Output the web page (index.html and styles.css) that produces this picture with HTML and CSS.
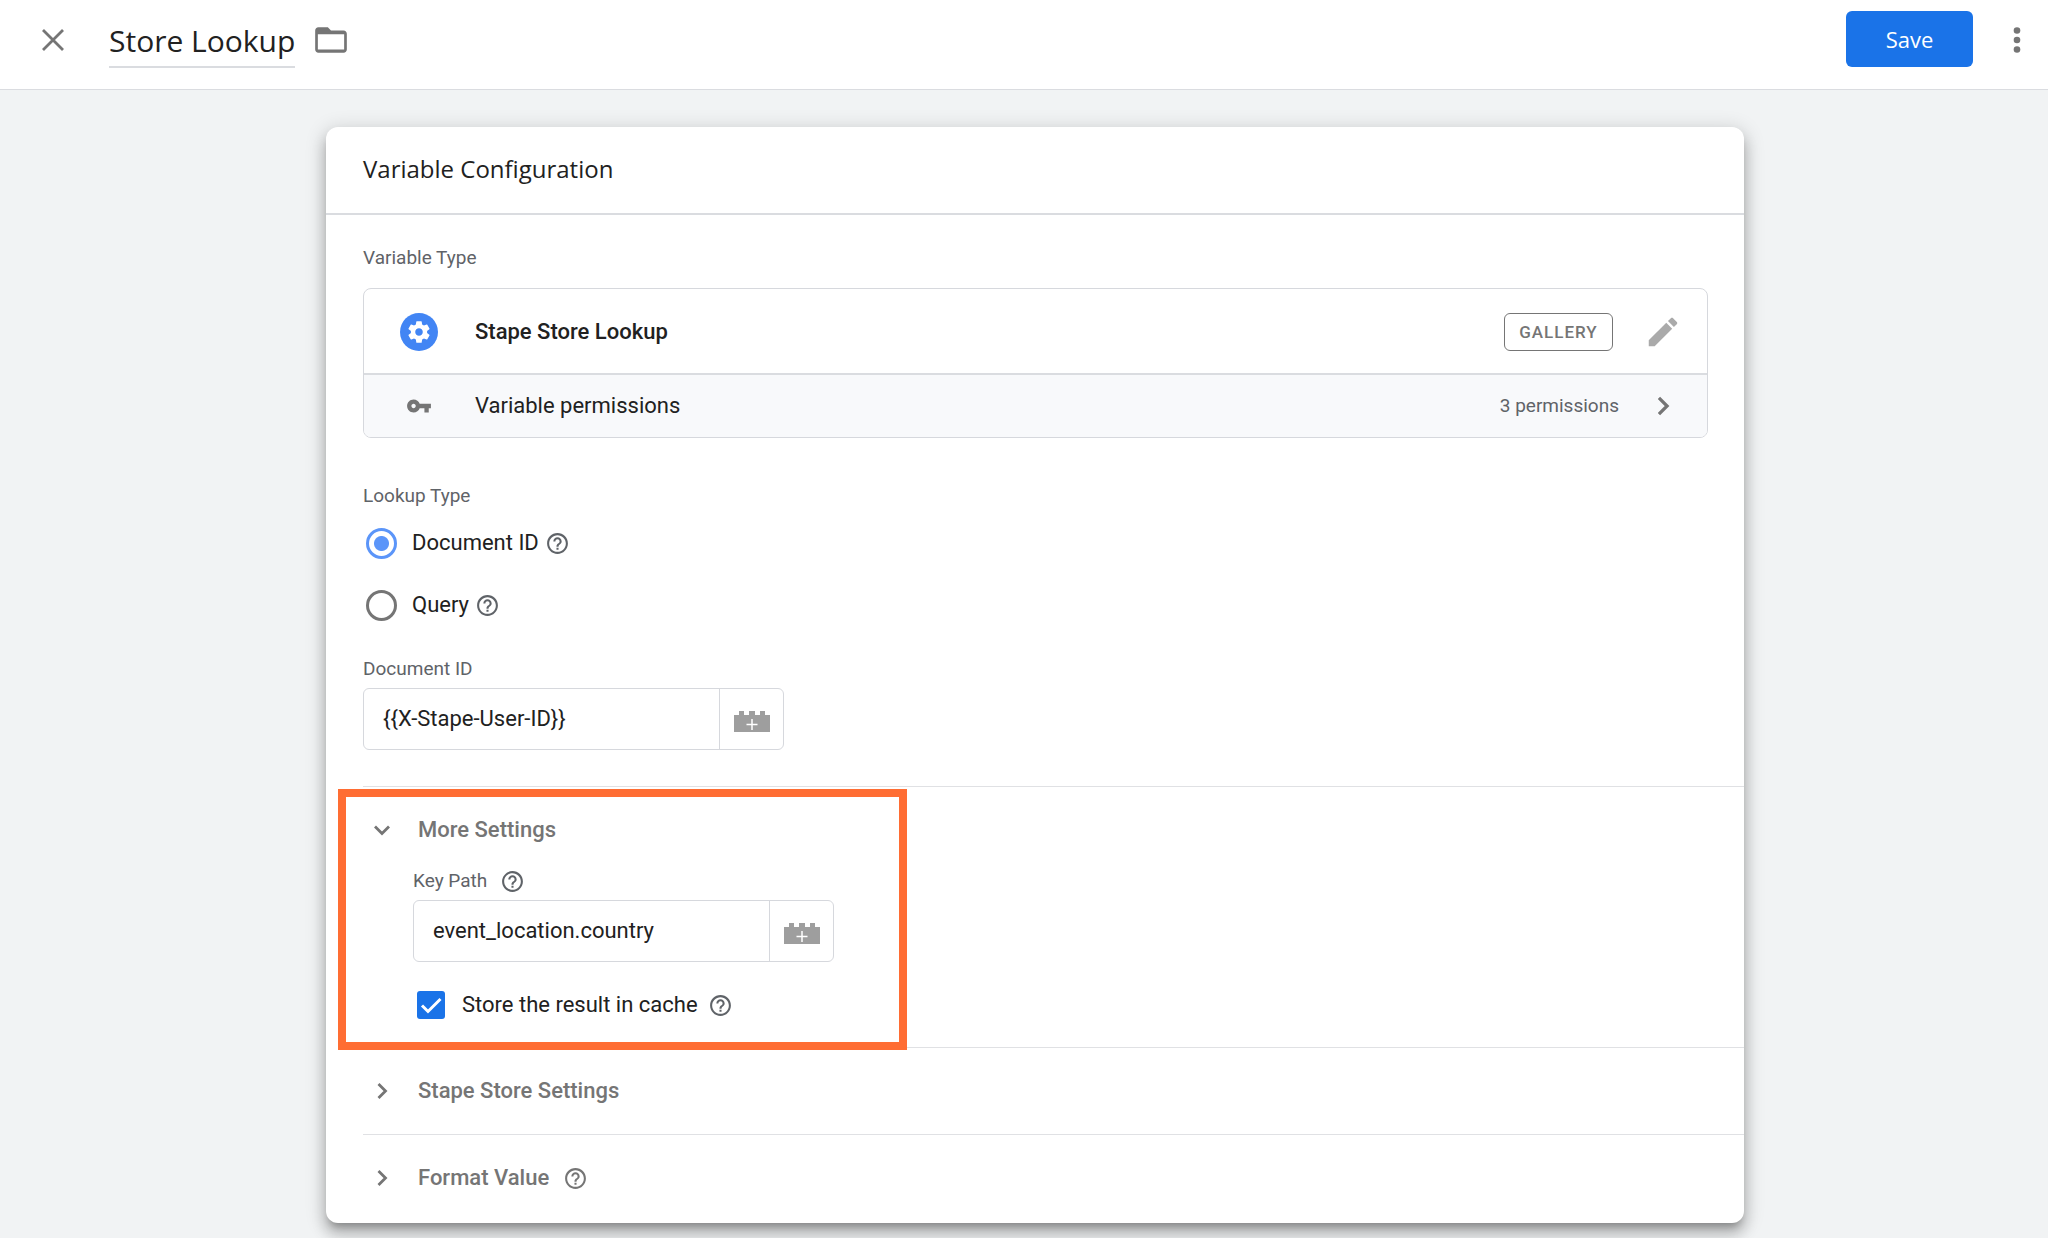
FILE: index.html
```html
<!DOCTYPE html>
<html lang="en">
<head>
<meta charset="utf-8">
<meta name="viewport" content="width=device-width, initial-scale=1">
<title>Store Lookup</title>
<link rel="stylesheet" href="styles.css">
</head>
<body>
<svg class="sprite" aria-hidden="true">
  <symbol id="i-help" viewBox="0 0 24 24"><path d="M11 18h2v-2h-2v2zm1-16C6.480 2 2 6.480 2 12s4.480 10 10 10 10-4.480 10-10S17.520 2 12 2zm0 18c-4.410 0-8-3.590-8-8s3.590-8 8-8 8 3.590 8 8-3.590 8-8 8zm0-14c-2.210 0-4 1.790-4 4h2c0-1.100.9-2 2-2s2 .9 2 2c0 2-3 1.750-3 5h2c0-2.250 3-2.500 3-5 0-2.210-1.790-4-4-4z"/></symbol>
  <symbol id="i-brick" viewBox="0 0 36 21"><path d="M0 4h5V0h5v4h5V0h6v4h5V0h5v4h5v17H0z"/><path d="M18 8v11M12.500 13.500h11" fill="none" stroke="#fff" stroke-width="1.500"/></symbol>
  <symbol id="i-chevron" viewBox="0 0 24 24"><path d="M8.500 5l7 7-7 7" fill="none" stroke="currentColor" stroke-width="2.800"/></symbol>
</svg>

<header class="topbar">
  <button class="icon-btn" type="button" aria-label="Close">
    <svg width="24" height="24" viewBox="0 0 24 24"><path d="M2 2l20 20M22 2L2 22" fill="none" stroke="currentColor" stroke-width="2.800"/></svg>
  </button>
  <input class="title-input" type="text" value="Store Lookup" aria-label="Variable name">
  <button class="icon-btn folder" type="button" aria-label="Folder">
    <svg width="38" height="38" viewBox="0 0 24 24"><path fill-rule="evenodd" d="M10 4H4c-1.100 0-1.990.9-1.990 2L2 18c0 1.100.9 2 2 2h16c1.100 0 2-.9 2-2V8c0-1.100-.9-2-2-2h-8l-2-2zM20.300 18H3.700V8.300h16.600z"/></svg>
  </button>
  <div class="topbar-actions">
    <button class="save" type="button">Save</button>
    <button class="icon-btn" type="button" aria-label="More actions">
      <svg width="8" height="28" viewBox="0 0 8 28"><circle cx="4" cy="4.500" r="3.300"/><circle cx="4" cy="14" r="3.300"/><circle cx="4" cy="23.500" r="3.300"/></svg>
    </button>
  </div>
</header>

<main class="page">
  <section class="card">
    <h1 class="card-title">Variable Configuration</h1>
    <div class="card-body">
      <div class="inner">
        <h2 class="label">Variable Type</h2>
        <div class="type-box">
          <div class="type-row">
            <span class="type-icon badge"><svg width="26" height="26" viewBox="0 0 24 24"><path d="M19.430 12.980c.04-.32.07-.64.07-.98s-.03-.66-.07-.98l2.110-1.650c.19-.15.24-.42.12-.64l-2-3.460c-.12-.22-.39-.3-.61-.22l-2.490 1c-.52-.4-1.080-.73-1.690-.98l-.38-2.650C14.460 2.180 14.250 2 14 2h-4c-.25 0-.46.18-.49.42l-.38 2.650c-.61.25-1.170.59-1.690.98l-2.490-1c-.23-.09-.49 0-.61.22l-2 3.460c-.13.22-.07.49.12.64l2.110 1.650c-.04.32-.07.65-.07.98s.03.66.07.98l-2.110 1.650c-.19.15-.24.42-.12.64l2 3.460c.12.22.39.3.61.22l2.490-1c.52.4 1.080.73 1.690.98l.38 2.650c.03.24.24.42.49.42h4c.25 0 .46-.18.49-.42l.38-2.650c.61-.25 1.170-.59 1.690-.98l2.490 1c.23.09.49 0 .61-.22l2-3.460c.12-.22.07-.49-.12-.64l-2.110-1.650zM12 15.500c-1.930 0-3.500-1.570-3.500-3.500s1.570-3.500 3.500-3.500 3.500 1.570 3.500 3.500-1.570 3.500-3.500 3.500z"/></svg></span>
            <span class="type-name">Stape Store Lookup</span>
            <button class="gallery" type="button">GALLERY</button>
            <button class="icon-btn edit" type="button" aria-label="Edit">
              <svg width="38" height="38" viewBox="0 0 24 24"><path d="M3 17.250V21h3.750L17.810 9.940l-3.750-3.750L3 17.250zM20.710 7.040c.39-.39.39-1.020 0-1.410l-2.340-2.340c-.39-.39-1.020-.39-1.410 0l-1.830 1.830 3.750 3.750 1.830-1.830z"/></svg>
            </button>
          </div>
          <div class="type-row permissions">
            <span class="type-icon"><svg width="26" height="26" viewBox="0 0 24 24"><path d="M12.650 10C11.830 7.670 9.610 6 7 6c-3.310 0-6 2.690-6 6s2.690 6 6 6c2.610 0 4.830-1.670 5.650-4H17v4h4v-4h2v-4H12.650zM7 14c-1.100 0-2-.9-2-2s.9-2 2-2 2 .9 2 2-.9 2-2 2z"/></svg></span>
            <span class="type-name">Variable permissions</span>
            <span class="count">3 permissions</span>
            <button class="icon-btn" type="button" aria-label="Show permissions">
              <svg width="28" height="28"><use href="#i-chevron"/></svg>
            </button>
          </div>
        </div>

        <fieldset class="lookup">
          <legend class="label">Lookup Type</legend>
          <div class="option">
            <input class="radio" type="radio" name="lookup" id="by-id" checked>
            <label for="by-id">Document ID</label>
            <button class="help" type="button" aria-label="Help"><svg width="25" height="25"><use href="#i-help"/></svg></button>
          </div>
          <div class="option">
            <input class="radio" type="radio" name="lookup" id="by-query">
            <label for="by-query">Query</label>
            <button class="help" type="button" aria-label="Help"><svg width="25" height="25"><use href="#i-help"/></svg></button>
          </div>
        </fieldset>

        <label class="label" for="doc-id">Document ID</label>
        <div class="field">
          <input type="text" id="doc-id" value="{{X-Stape-User-ID}}">
          <button type="button" aria-label="Insert variable"><svg width="36" height="21"><use href="#i-brick"/></svg></button>
        </div>
      </div>

      <details class="group highlighted" open>
        <summary><svg class="arrow" width="24" height="24"><use href="#i-chevron"/></svg><span>More Settings</span></summary>
        <div class="group-body">
          <div class="label-row">
            <label class="label" for="key-path">Key Path</label>
            <button class="help" type="button" aria-label="Help"><svg width="25" height="25"><use href="#i-help"/></svg></button>
          </div>
          <div class="field">
            <input type="text" id="key-path" value="event_location.country">
            <button type="button" aria-label="Insert variable"><svg width="36" height="21"><use href="#i-brick"/></svg></button>
          </div>
          <div class="check-row">
            <span class="check">
              <input type="checkbox" id="cache" checked>
              <svg width="28" height="28" viewBox="0 0 28 28"><path d="M5 14.500l6 6L23.500 8" fill="none" stroke="#fff" stroke-width="3"/></svg>
            </span>
            <label for="cache">Store the result in cache</label>
            <button class="help" type="button" aria-label="Help"><svg width="25" height="25"><use href="#i-help"/></svg></button>
          </div>
        </div>
      </details>
      <details class="group">
        <summary><svg class="arrow" width="24" height="24"><use href="#i-chevron"/></svg><span>Stape Store Settings</span></summary>
      </details>
      <details class="group">
        <summary><svg class="arrow" width="24" height="24"><use href="#i-chevron"/></svg><span>Format Value</span><svg class="summary-help" width="25" height="25"><use href="#i-help"/></svg></summary>
      </details>
    </div>
  </section>
</main>
</body>
</html>
```
FILE: styles.css
```css
* { box-sizing: border-box; }

body {
  margin: 0;
  min-height: 100vh;
  background: #f1f3f4;
  color: #212121;
  font-family: Roboto, sans-serif;
  font-size: 22px;
  line-height: 24px;
}

button, input {
  margin: 0;
  padding: 0;
  border: 0;
  background: none;
  color: inherit;
  font: inherit;
}

button { cursor: pointer; }
svg { display: block; fill: currentColor; }
.sprite { position: absolute; width: 0; height: 0; }

/* Top bar */
.topbar {
  display: flex;
  align-items: flex-start;
  padding: 11px 12px 20px 34px;
  border-bottom: 1px solid #dadce0;
  background: #fff;
}

.icon-btn {
  display: flex;
  align-items: center;
  justify-content: center;
  flex: none;
  width: 38px;
  color: #757575;
}

.topbar .icon-btn { height: 58px; }

.title-input {
  width: 186px;
  height: 57px;
  margin-left: 37px;
  padding-top: 4px;
  border-bottom: 2px solid #dadce0;
  font-family: "Open Sans", sans-serif;
  font-size: 30px;
}

.folder { margin-left: 17px; }

.topbar-actions {
  display: flex;
  gap: 25px;
  margin-left: auto;
}

.save {
  width: 127px;
  height: 56px;
  border-radius: 6px;
  background: #1a73e8;
  color: #fff;
  font-family: "Open Sans", sans-serif;
  font-size: 22px;
  font-weight: 500;
}

/* Card */
.page { padding: 37px 16px 40px 38px; }

.card {
  max-width: 1418px;
  margin: 0 auto;
  padding-bottom: 2px;
  border-radius: 12px;
  background: #fff;
  box-shadow: 0 7px 7px -4px rgba(0, 0, 0, .24), 0 11px 14px 1px rgba(0, 0, 0, .18), 0 4px 19px 3px rgba(0, 0, 0, .14);
}

.card-title {
  margin: 0;
  padding: 30px 37px 32px;
  border-bottom: 2px solid #dadce0;
  font-family: "Open Sans", sans-serif;
  font-size: 24px;
  font-weight: 400;
}

.card-body { padding: 31px 0 0 37px; }
.inner { padding: 0 36px 36px 0; }

.label {
  display: block;
  margin: 0;
  padding: 0;
  color: #5f6368;
  font-size: 19px;
  font-weight: 400;
}

/* Variable type */
.type-box {
  margin-top: 18px;
  border: 1px solid #d6d8dd;
  border-radius: 8px;
  overflow: hidden;
}

.type-row {
  display: flex;
  align-items: center;
  height: 84px;
  padding: 2px 25px 0 36px;
}

.permissions {
  height: 64px;
  border-top: 2px solid #dadce0;
  padding-top: 0;
  background: #f8f9fb;
}

.type-icon {
  display: flex;
  align-items: center;
  justify-content: center;
  width: 38px;
  height: 38px;
  color: #757575;
}

.badge { border-radius: 50%; background: #4285f4; color: #fff; }
.type-name { margin: 0 auto 0 37px; }
.type-row:first-child .type-name { font-weight: 500; }

.gallery {
  width: 109px;
  height: 38px;
  margin-right: 31px;
  border: 1px solid #757575;
  border-radius: 6px;
  color: #757575;
  font-size: 17px;
  font-weight: 500;
  letter-spacing: 1px;
}

.edit { color: #aaa; }

.count {
  margin-right: 25px;
  color: #5f6368;
  font-size: 19px;
}

/* Lookup type */
.lookup {
  margin: 46px 0 21px;
  padding: 0;
  border: 0;
}

.lookup .label { margin-bottom: 4px; }

.option {
  display: flex;
  align-items: center;
  height: 62px;
}

.radio {
  appearance: none;
  width: 31px;
  height: 31px;
  margin: 0 15px 0 3px;
  border: 3px solid #757575;
  border-radius: 50%;
}

.radio:checked {
  border-color: #5b95f9;
  background: radial-gradient(circle, #5b95f9 7px, transparent 8px);
}

.help { color: #5f6368; }
.option .help { margin-left: 6px; }

/* Text field with its variable picker */
.field {
  display: flex;
  width: 421px;
  max-width: 100%;
  height: 62px;
  margin-top: 7px;
  border: 1px solid #d6d8dd;
  border-radius: 6px;
}

.field input {
  flex: 1;
  min-width: 0;
  padding-left: 19px;
}

.field button {
  display: flex;
  align-items: center;
  justify-content: center;
  width: 64px;
  padding-top: 4px;
  border-left: 1px solid #d6d8dd;
  color: #9e9e9e;
}

/* Collapsible groups */
.group {
  position: relative;
  border-top: 1px solid #e0e1e4;
}

.group summary {
  display: flex;
  align-items: center;
  height: 86px;
  padding-left: 7px;
  color: #757575;
  font-weight: 500;
  list-style: none;
  cursor: pointer;
}

.group summary span { margin-left: 24px; }
.group[open] summary { height: 82px; padding-top: 4px; }
.group[open] .arrow { transform: rotate(90deg); }
.summary-help { margin-left: 14px; }
.group-body { padding: 0 0 28px 50px; }

.highlighted::after {
  content: "";
  position: absolute;
  z-index: 1;
  top: 2px;
  left: -25px;
  bottom: -3px;
  box-sizing: border-box;
  width: 569px;
  border: 8px solid #ff6d33;
  pointer-events: none;
}

.label-row {
  display: flex;
  align-items: center;
  gap: 13px;
  height: 24px;
}

.check-row {
  display: flex;
  align-items: center;
  margin: 29px 0 0 4px;
}

.check { position: relative; margin-right: 17px; }

.check input {
  display: block;
  appearance: none;
  width: 28px;
  height: 28px;
  border-radius: 3px;
  background: #1a73e8;
}

.check svg {
  position: absolute;
  inset: 0;
  pointer-events: none;
}

.check-row .help { margin-left: 10px; }
```
